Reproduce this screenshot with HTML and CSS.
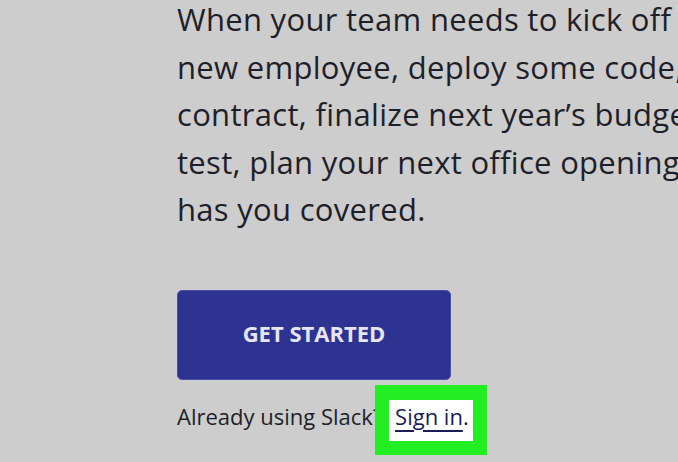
FILE: index.html
```html
<!DOCTYPE html>
<html lang="en">
<head>
    <meta charset="UTF-8">
    <meta name="viewport" content="width=device-width, initial-scale=1.0">
    <title>Slack</title>
    <link rel="stylesheet" href="styles.css">
</head>
<body>
    <main class="hero">
        <p class="lead">
            When your team needs to kick off<br>
            new employee, deploy some code,<br>
            contract, finalize next year’s budget,<br>
            test, plan your next office opening,<br>
            has you covered.
        </p>

        <a href="#" class="button">GET STARTED</a>

        <p class="signin">Already using Slack? <span class="highlight"><a href="#">Sign in</a>.</span></p>
    </main>
</body>
</html>
```

FILE: styles.css
```css
body {
    background-color: #cdcdcd; /* grey page */
    color: #1f1f29;
    font-family: "Open Sans", Lato, sans-serif;
    margin: 0;
    padding: 0;
    height: 100vh;
    overflow: hidden;
}

.hero {
    padding-left: 177px;
    display: flex;
    flex-direction: column;
    align-items: flex-start;
}

.lead {
    font-size: 31px;
    letter-spacing: 0.3px;
    line-height: 47.5px;
    margin: -4px 0 0 0;
    white-space: nowrap;
}

.button {
    margin-top: 56px;
    width: 274px;
    height: 90px;
    box-sizing: border-box;
    padding-bottom: 3px;
    display: flex;
    justify-content: center;
    align-items: center;
    background-color: #2e3391;
    border: 1px solid #4a4fa8;
    border-radius: 5px;
    color: #e6e6f2;
    font-size: 22px;
    font-weight: bold;
    text-decoration: none;
}

.signin {
    font-size: 22px;
    line-height: 30px;
    margin: 21px 0 0 0;
    white-space: nowrap;
}

/* green marker over the sign in link */
.highlight {
    display: inline-block;
    background-color: #fff;
    border: solid #22ee22;
    border-width: 15px 14px 14px 14px;
    padding: 1px 4px 10px 6px;
    margin: -16px 0 -24px -13px;
}

.highlight a {
    color: #1c1c58;
    text-decoration: underline;
    text-underline-offset: 5px;
    text-decoration-thickness: 2px;
}
```
